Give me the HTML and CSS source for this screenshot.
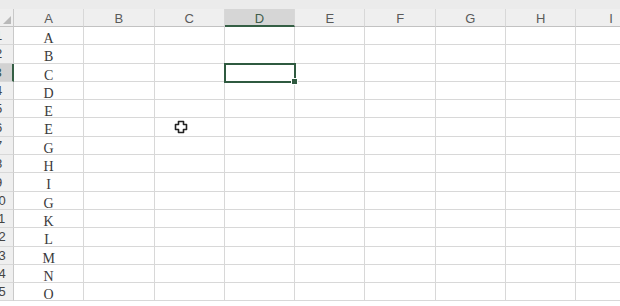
FILE: index.html
```html
<!DOCTYPE html>
<html lang="en">
<head>
    <meta charset="UTF-8">
    <meta name="viewport" content="width=device-width, initial-scale=1.0">
    <title>Sheet</title>
    <link rel="stylesheet" href="styles.css">
</head>
<body>

    <div class="topbar"></div>

    <div class="sheet" id="sheet">
        <div class="corner"><span class="tri"></span></div>
        <div class="colhead">A</div>
        <div class="colhead">B</div>
        <div class="colhead">C</div>
        <div class="colhead active">D</div>
        <div class="colhead">E</div>
        <div class="colhead">F</div>
        <div class="colhead">G</div>
        <div class="colhead">H</div>
        <div class="colhead">I</div>
    </div>

    <svg class="cursor" width="14" height="14" viewBox="0 0 14 14">
        <path d="M4.5 1.5h5v3h3v5h-3v3h-5v-3h-3v-5h3z" fill="#fff" stroke="#222" stroke-width="1.6" stroke-linejoin="round"/>
    </svg>

    <script>
        var letters = ['A', 'B', 'C', 'D', 'E', 'E', 'G', 'H', 'I', 'G', 'K', 'L', 'M', 'N', 'O'];
        var sheet = document.getElementById('sheet');

        letters.forEach(function (letter, i) {
            var num = document.createElement('div');
            num.className = 'rowhead' + (i === 2 ? ' active' : '');
            num.textContent = i + 1;
            sheet.appendChild(num);

            for (var c = 0; c < 9; c++) {
                var cell = document.createElement('div');
                cell.className = 'cell';
                if (c === 0) cell.textContent = letter;
                if (c === 3 && i === 2) {
                    cell.className += ' selected';
                    var handle = document.createElement('span');
                    handle.className = 'handle';
                    cell.appendChild(handle);
                }
                sheet.appendChild(cell);
            }
        });
    </script>

</body>
</html>
```

FILE: styles.css
```css
body {
    margin: 0;
    width: 620px;
    height: 306px;
    overflow: hidden;
    background: #fff;
    position: relative;
    font-family: "Liberation Sans", Arial, sans-serif;
}
.topbar {
    height: 9px;
    background: #ebebeb;
}
/* the row-number column is partly off screen on the left */
.sheet {
    display: grid;
    grid-template-columns: 30px repeat(9, 70.3px);
    grid-template-rows: 18px;
    grid-auto-rows: 18.3px;
    margin-left: -16px;
}
.corner, .colhead, .rowhead {
    background: #efefef;
    color: #5a5a5a;
    box-sizing: border-box;
}
.corner {
    position: relative;
    border-right: 1px solid #c9c9c9;
    border-bottom: 1px solid #c2c2c2;
}
.tri {
    position: absolute;
    right: 2px;
    bottom: 2px;
    width: 0;
    height: 0;
    border-left: 8px solid transparent;
    border-bottom: 8px solid #b9b9b9;
}
.colhead {
    display: flex;
    align-items: center;
    justify-content: center;
    font-size: 13px;
    padding-top: 2px;
    border-right: 1px solid #d8d8d8;
    border-bottom: 1px solid #c2c2c2;
}
.colhead.active {
    background: #d6d6d6;
    color: #3f5d4a;
    border-bottom: 2px solid #355f45;
}
.rowhead {
    display: flex;
    align-items: center;
    justify-content: center;
    font-size: 13px;
    color: #444;
    white-space: nowrap;
    border-right: 1px solid #c9c9c9;
    border-bottom: 1px solid #d8d8d8;
}
.rowhead.active {
    background: #d2d2d2;
    color: #2f4f3b;
    border-right: 2px solid #355f45;
}
.cell {
    position: relative;
    box-sizing: border-box;
    display: flex;
    align-items: flex-start;
    justify-content: center;
    padding-top: 5px;
    font-family: "Liberation Serif", "Times New Roman", serif;
    font-size: 14px;
    line-height: 14px;
    color: #3a3a3a;
    border-right: 1px solid #d8d8d8;
    border-bottom: 1px solid #d8d8d8;
}
.cell.selected {
    outline: 2px solid #2f5a40;
    outline-offset: -1px;
    z-index: 1;
}
.handle {
    position: absolute;
    right: -4px;
    bottom: -4px;
    width: 5px;
    height: 5px;
    background: #2f5a40;
    border: 1px solid #fff;
}
.cursor {
    position: absolute;
    left: 174px;
    top: 120px;
}
```
